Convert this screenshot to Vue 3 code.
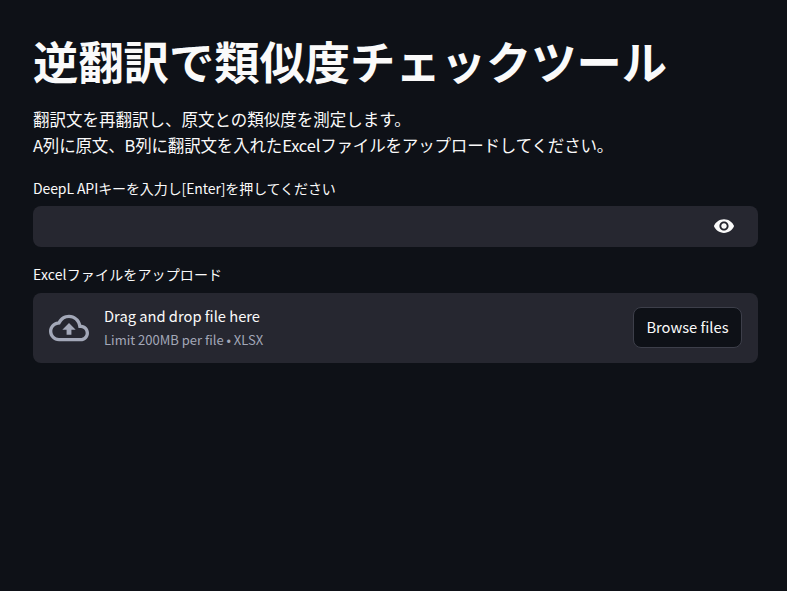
<template>
  <main class="page">
    <h1>逆翻訳で類似度チェックツール</h1>
    <p class="intro">翻訳文を再翻訳し、原文との類似度を測定します。<br /><span class="intro-second">A列に原文、B列に翻訳文を入れたExcelファイルをアップロードしてください。</span></p>

    <label class="label label--key">DeepL APIキーを入力し[Enter]を押してください</label>
    <div class="key-input">
      <svg class="eye" viewBox="0 0 24 24" width="22" height="22">
        <path fill="#fafafa" d="M12 4.5C7 4.5 2.73 7.61 1 12c1.73 4.39 6 7.5 11 7.5s9.27-3.11 11-7.5c-1.73-4.39-6-7.5-11-7.5zM12 17c-2.76 0-5-2.24-5-5s2.24-5 5-5 5 2.24 5 5-2.24 5-5 5zm0-8c-1.66 0-3 1.34-3 3s1.34 3 3 3 3-1.34 3-3-1.34-3-3-3z" />
      </svg>
    </div>

    <label class="label label--upload">Excelファイルをアップロード</label>
    <section class="dropzone">
      <svg class="cloud" viewBox="0 0 24 24" width="40" height="40">
        <path fill="#a3a8b8" d="M19.35 10.04C18.67 6.59 15.64 4 12 4 9.11 4 6.6 5.64 5.35 8.04 2.34 8.36 0 10.91 0 14c0 3.31 2.69 6 6 6h13c2.76 0 5-2.24 5-5 0-2.64-2.05-4.78-4.65-4.96zM19 18H6c-2.21 0-4-1.79-4-4 0-2.05 1.53-3.76 3.56-3.97l1.07-.11.5-.95C8.08 7.14 9.94 6 12 6c2.62 0 4.88 1.86 5.39 4.43l.3 1.5 1.53.11c1.56.1 2.78 1.41 2.78 2.96 0 1.65-1.35 3-3 3zM8 13h2.55v3h2.9v-3H16l-4-4z" />
      </svg>
      <div class="drop-text">
        <div class="drop-title">Drag and drop file here</div>
        <div class="drop-limit">Limit 200MB per file • XLSX</div>
      </div>
      <button class="browse">Browse files</button>
    </section>
  </main>
</template>

<script setup>
</script>

<style>
html, body { background: #0e1117; }
</style>

<style scoped>
.page {
  box-sizing: border-box;
  height: 591px;
  padding: 30px 29px 0 33px;
  background: #0e1117;
  color: #fafafa;
  font-family: "Noto Sans CJK JP", sans-serif;
}
h1 {
  margin: 0;
  font-size: 45.3px;
  line-height: 60px;
  font-weight: 700;
}
.intro {
  margin: 16px 0 0;
  font-size: 16.5px;
  line-height: 26px;
}
.intro-second { letter-spacing: -0.17px; }
.label {
  display: block;
  margin-top: 20px;
  font-size: 14px;
  line-height: 20px;
}
.label--key { letter-spacing: -0.1px; }
.label--upload {
  margin-top: 17px;
  letter-spacing: 0.14px;
}
.key-input {
  display: flex;
  align-items: center;
  justify-content: flex-end;
  height: 41px;
  margin-top: 8px;
  padding: 0 23px 2px 0;
  box-sizing: border-box;
  border-radius: 8px;
  background: #262730;
}
.dropzone {
  display: flex;
  align-items: center;
  height: 70px;
  margin-top: 9px;
  padding: 0 16px;
  box-sizing: border-box;
  border-radius: 8px;
  background: #262730;
}
.cloud { flex: none; }
.drop-text {
  flex: 1;
  margin: 0 0 2px 15px;
}
.drop-title {
  font-size: 14.7px;
  line-height: 22px;
  font-weight: 400;
}
.drop-limit {
  margin-top: 4px;
  font-size: 13px;
  line-height: 18px;
  color: #a3a8b8;
}
.browse {
  height: 41px;
  width: 109px;
  margin-bottom: 2px;
  padding: 0 0 2px;
  border: 1px solid #3d3f4a;
  border-radius: 8px;
  background: #0e1117;
  color: #fafafa;
  font: 14.7px "Noto Sans CJK JP", sans-serif;
}
</style>
